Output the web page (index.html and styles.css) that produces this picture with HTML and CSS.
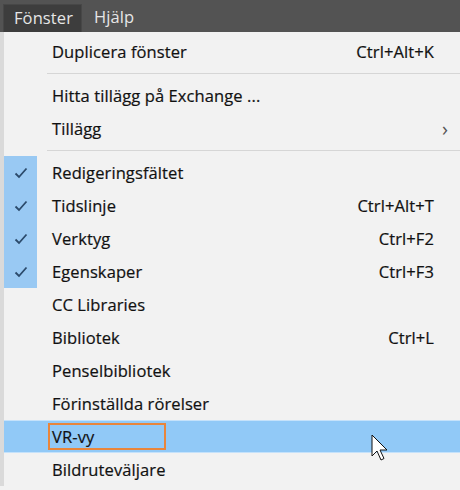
FILE: index.html
```html
<!DOCTYPE html>
<html lang="sv">
<head>
<meta charset="utf-8">
<link rel="stylesheet" href="styles.css">
</head>
<body>
<div class="menubar">
  <div class="tab active">Fönster</div>
  <div class="tab">Hjälp</div>
</div>
<div class="menu">
  <div class="row"><span class="chk"></span><span class="label">Duplicera fönster</span><span class="sc">Ctrl+Alt+K</span></div>
  <div class="sep"></div>
  <div class="row"><span class="chk"></span><span class="label">Hitta tillägg på Exchange ...</span><span class="sc"></span></div>
  <div class="row"><span class="chk"></span><span class="label">Tillägg</span><span class="sc arrow">›</span></div>
  <div class="sep"></div>
  <div class="checked">
    <div class="row"><span class="chk"><svg viewBox="0 0 14 12" width="14" height="12"><path d="M1.5 6.5 L5 10 L12.5 1.5" fill="none" stroke="#2b4a6b" stroke-width="1.8"/></svg></span><span class="label">Redigeringsfältet</span><span class="sc"></span></div>
    <div class="row"><span class="chk"><svg viewBox="0 0 14 12" width="14" height="12"><path d="M1.5 6.5 L5 10 L12.5 1.5" fill="none" stroke="#2b4a6b" stroke-width="1.8"/></svg></span><span class="label">Tidslinje</span><span class="sc">Ctrl+Alt+T</span></div>
    <div class="row"><span class="chk"><svg viewBox="0 0 14 12" width="14" height="12"><path d="M1.5 6.5 L5 10 L12.5 1.5" fill="none" stroke="#2b4a6b" stroke-width="1.8"/></svg></span><span class="label">Verktyg</span><span class="sc">Ctrl+F2</span></div>
    <div class="row"><span class="chk"><svg viewBox="0 0 14 12" width="14" height="12"><path d="M1.5 6.5 L5 10 L12.5 1.5" fill="none" stroke="#2b4a6b" stroke-width="1.8"/></svg></span><span class="label">Egenskaper</span><span class="sc">Ctrl+F3</span></div>
  </div>
  <div class="row"><span class="chk"></span><span class="label">CC Libraries</span><span class="sc"></span></div>
  <div class="row"><span class="chk"></span><span class="label">Bibliotek</span><span class="sc">Ctrl+L</span></div>
  <div class="row"><span class="chk"></span><span class="label">Penselbibliotek</span><span class="sc"></span></div>
  <div class="row"><span class="chk"></span><span class="label">Förinställda rörelser</span><span class="sc"></span></div>
  <div class="row hl"><span class="chk"></span><span class="label"><span class="box">VR-vy</span></span><span class="sc"></span>
    <svg class="cursor" viewBox="0 0 20 30" width="20" height="30"><path d="M1 1 L1 22 L6 17 L10 26 L13 24.5 L9 16 L16 16 Z" fill="#fff" stroke="#111" stroke-width="1"/></svg>
  </div>
  <div class="row"><span class="chk"></span><span class="label">Bildruteväljare</span><span class="sc"></span></div>
</div>
</body>
</html>
```
FILE: styles.css
```css
* { box-sizing: border-box; }
html, body { margin: 0; padding: 0; }
body {
  width: 460px;
  height: 490px;
  overflow: hidden;
  background: #f2f2f2;
  font-family: "Open Sans", "Noto Sans", sans-serif;
  font-size: 16.5px;
  letter-spacing: 0.1px;
  color: #111;
  -webkit-text-stroke: 0.2px #111;
}
.menubar {
  height: 32px;
  background: #535353;
  display: flex;
  align-items: flex-end;
  padding-left: 3px;
  -webkit-text-stroke: 0;
}
.tab {
  height: 28px;
  line-height: 26px;
  padding: 0 12px;
  color: #e6e6e6;
  font-size: 16.5px;
}
.tab.active {
  width: 79px;
  padding: 0 10px;
  background: #3d3d3d;
  border: 1px solid #474747;
  border-bottom: none;
}
.menu {
  border-left: 4px solid #dadada;
  background: #f2f2f2;
  padding-top: 3px;
}
.row {
  position: relative;
  display: flex;
  align-items: center;
  height: 33px;
}
.chk {
  width: 33px;
  flex: none;
  display: flex;
  justify-content: center;
  align-items: center;
}
.label {
  flex: 1;
  padding-left: 15px;
}
.sc {
  padding-right: 26px;
  text-align: right;
}
.arrow {
  font-size: 20px;
  color: #555;
  padding-right: 12px;
  line-height: 1;
  -webkit-text-stroke: 0;
}
.sep {
  height: 1px;
  background: #d6d6d6;
  margin: 5px 0 5px 43px;
}
.checked {
  background: linear-gradient(to right, #99c9f3 0, #99c9f3 33px, transparent 33px);
}
.hl {
  background: #91c9f7;
  border-top: 1px solid #c5e2fb;
  border-bottom: 1px solid #c5e2fb;
}
.box {
  display: inline-block;
  width: 118px;
  height: 27px;
  line-height: 23px;
  margin-left: -4px;
  padding-left: 2px;
  border: 2px solid #e8853b;
}
.cursor {
  position: absolute;
  left: 367px;
  top: 13px;
}
```
